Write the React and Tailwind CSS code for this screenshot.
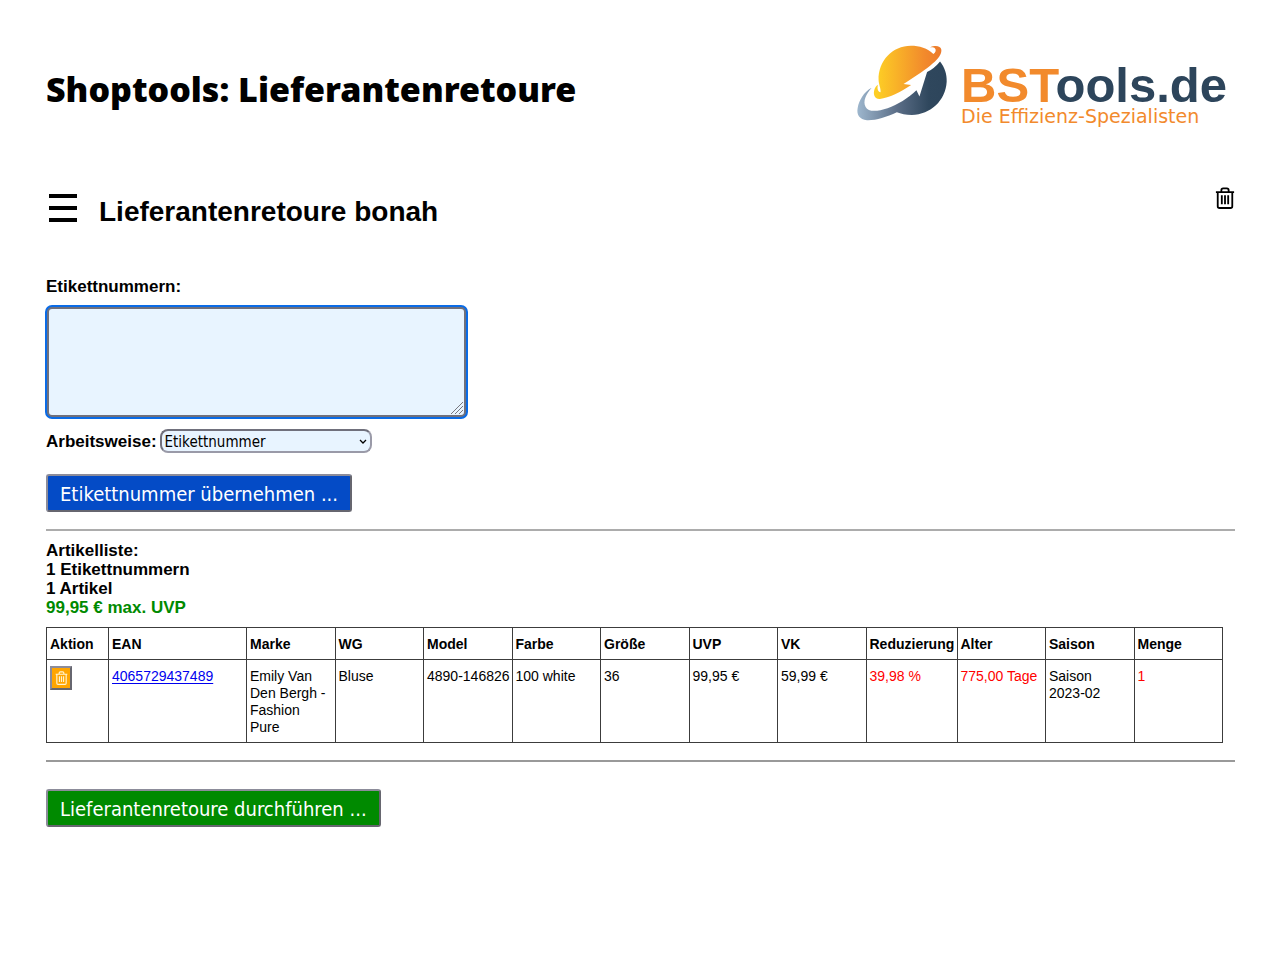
const columns = [
  { title: 'Aktion', width: 'w-[62px]' },
  { title: 'EAN', width: 'w-[138px]' },
  { title: 'Marke' },
  { title: 'WG' },
  { title: 'Model' },
  { title: 'Farbe' },
  { title: 'Größe' },
  { title: 'UVP' },
  { title: 'VK' },
  { title: 'Reduzierung', width: 'w-[91px]' },
  { title: 'Alter' },
  { title: 'Saison' },
  { title: 'Menge' },
];

const articles = [
  {
    ean: '4065729437489',
    brand: 'Emily Van Den Bergh - Fashion Pure',
    values: ['Bluse', '4890-146826', '100 white', '36', '99,95 €', '59,99 €'],
    reduction: '39,98 %',
    age: '775,00 Tage',
    season: 'Saison 2023-02',
    amount: '1',
  },
];

const BORDER = 'border border-[#3c3c3c] px-[3px] align-top';
const CELL = `${BORDER} pt-2 pb-1.5`;
const OUTSET = 'border-2 border-t-[#8c8c9a] border-r-[#66666f] border-b-[#66666f] border-l-[#8c8c9a]';
const ACTION = `block h-[38px] rounded-[3px] ${OUTSET} px-3 pt-0.5 font-['DejaVu_Sans_Condensed','Noto_Sans',sans-serif] text-[20px] leading-8 text-white`;

function Globe() {
  return (
    <svg viewBox="45 42 280 234" className="h-[78px] w-[93px] shrink-0" aria-hidden="true">
      <defs>
        <linearGradient id="sun" x1="0" x2="1">
          <stop offset="0.05" stopColor="#fdce25" />
          <stop offset="0.75" stopColor="#f28a2c" />
          <stop offset="1" stopColor="#ec7a2c" />
        </linearGradient>
        <linearGradient id="sea" gradientUnits="userSpaceOnUse" x1="50" x2="318" y1="0" y2="0">
          <stop offset="0" stopColor="#9db6cd" />
          <stop offset="0.45" stopColor="#5a6d86" />
          <stop offset="0.8" stopColor="#2f475d" />
          <stop offset="1" stopColor="#2d455b" />
        </linearGradient>
      </defs>
      <path
        fill="url(#sea)"
        d="M298 94C312 112 319 132 318 155C315 211 270 254 213 255C195 255 180 252 168 247C136 262 104 272 78 271C56 269 46 254 50 234C54 211 68 186 92 173C75 192 65 214 74 231C82 247 109 245 140 235C171 224 201 206 227 181L236 200L259 126Q281 115 298 94Z"
      />
      <path
        fill="url(#sun)"
        d="M113 150C112 92 155 47 210 47C236 47 260 54 278 72C285 67 287 60 283 55C279 51 273 51 267 52C282 45 300 46 302 59C304 84 268 111 188 162L211 165C180 186 144 204 117 207C99 208 96 190 101 177C103 171 107 166 111 164C108 177 111 184 119 187C120 175 114 166 113 150Z"
      />
    </svg>
  );
}

function TrashIcon({ className }) {
  return (
    <svg viewBox="0 0 22 24" className={className} fill="none" stroke="currentColor" strokeWidth="2" aria-hidden="true">
      <path d="M1 5.5H21M7 5V3.5Q7 1.5 9 1.5H13Q15 1.5 15 3.5V5M3 5.5V21Q3 23 5 23H17Q19 23 19 21V5.5M7.5 9V19M11 9V19M14.5 9V19" />
    </svg>
  );
}

export default function App() {
  return (
    <div className="bg-white pt-11 pr-[45px] pb-16 pl-[46px] font-['Liberation_Sans',Arial,sans-serif] text-[17px] leading-[19px] text-black">
      <header className="flex items-start justify-between">
        <h1 className="pt-5 font-['Noto_Sans','Open_Sans',sans-serif] text-[34px] leading-[50px] font-black">
          Shoptools: Lieferantenretoure
        </h1>
        <div className="flex gap-3 pr-2">
          <Globe />
          <div className="pt-4">
            <div className="text-[49px] leading-[50px] font-bold text-[#2d455b]">
              <span className="text-[#f28a2c]">BST</span>ools.de
            </div>
            <div className="font-['DejaVu_Sans',sans-serif] text-[19px] leading-3 text-[#f28a2c]">
              Die Effizienz-Spezialisten
            </div>
          </div>
        </div>
      </header>

      <main>
        <div className="mt-[64px] flex items-start justify-between">
          <div className="flex items-start gap-[22px]">
            <button type="button" aria-label="Menü" className="flex flex-col gap-2 pt-2 pl-[3px]">
              <span className="h-1 w-7 bg-black" />
              <span className="h-1 w-7 bg-black" />
              <span className="h-1 w-7 bg-black" />
            </button>
            <h2 className="pt-2.5 text-[28px] leading-8 font-bold">Lieferantenretoure bonah</h2>
          </div>
          <button type="button" aria-label="Liste leeren">
            <TrashIcon className="h-6 w-5" />
          </button>
        </div>

        <form className="mt-[49px]">
          <label htmlFor="labels" className="block font-bold">
            Etikettnummern:
          </label>
          <div className="relative mt-2.5 w-[421px] max-w-full">
            <textarea
              id="labels"
              className="block h-28 w-full resize-none rounded-md border-3 border-[#70707c] bg-[#e8f4ff] p-1 outline-2 -outline-offset-1 outline-[#0a6be6]"
            />
            <svg viewBox="0 0 14 14" className="pointer-events-none absolute right-[3px] bottom-[3px] size-3.5" stroke="#77777f" aria-hidden="true">
              <path d="M1 13L13 1M5 13L13 5M9 13L13 9" />
            </svg>
          </div>
          <div className="mt-[11px] flex items-center gap-[3px]">
            <label htmlFor="mode" className="font-bold">
              Arbeitsweise:
            </label>
            <div className="relative">
              <select
                id="mode"
                className="block h-6 w-[212px] appearance-none rounded-lg border-2 border-t-[#70707c] border-r-[#9a9aa8] border-b-[#9a9aa8] border-l-[#70707c] bg-[#e8f4ff] pt-0.5 pl-[3px] font-['DejaVu_Sans_Condensed','Noto_Sans',sans-serif] text-[15px] leading-[18px]"
              >
                <option>Etikettnummer</option>
              </select>
              <svg viewBox="0 0 8 6" className="pointer-events-none absolute top-2.5 right-[5px] h-1.5 w-2" fill="none" stroke="#000" strokeWidth="1.3" aria-hidden="true">
                <path d="M1 1L4 4L7 1" />
              </svg>
            </div>
          </div>
          <button type="button" className={`mt-[21px] ${ACTION} bg-[#044bc6]`}>
            Etikettnummer übernehmen ...
          </button>
        </form>

        <hr className="mt-[17px] border-t-2 border-[#acacac]" />

        <section className="mt-2.5">
          <div className="font-bold">
            <p>Artikelliste:</p>
            <p>1 Etikettnummern</p>
            <p>1 Artikel</p>
            <p className="text-[#008a00]">99,95 € max. UVP</p>
          </div>
          <table className="mt-2.5 w-[99%] table-fixed border-collapse text-left text-[14px] leading-[17px]">
            <thead>
              <tr>
                {columns.map((c) => (
                  <th key={c.title} scope="col" className={`${CELL} ${c.width ?? ''}`}>
                    {c.title}
                  </th>
                ))}
              </tr>
            </thead>
            <tbody>
              {articles.map((a) => (
                <tr key={a.ean}>
                  <td className={`${BORDER} py-1.5`}>
                    <button
                      type="button"
                      aria-label="Artikel löschen"
                      className={`flex h-6 w-[22px] items-center justify-center ${OUTSET} bg-[#ffa500] text-[#fff3d0]`}
                    >
                      <TrashIcon className="h-3.5 w-[13px]" />
                    </button>
                  </td>
                  <td className={CELL}>
                    <a href="#artikel" className="text-[#0000ee] underline underline-offset-2">
                      {a.ean}
                    </a>
                  </td>
                  <td className={CELL}>{a.brand}</td>
                  {a.values.map((v) => (
                    <td key={v} className={`${CELL} whitespace-nowrap`}>
                      {v}
                    </td>
                  ))}
                  <td className={`${CELL} text-[#ff0000]`}>{a.reduction}</td>
                  <td className={`${CELL} text-[#ff0000]`}>{a.age}</td>
                  <td className={CELL}>{a.season}</td>
                  <td className={`${CELL} text-[#ff0000]`}>{a.amount}</td>
                </tr>
              ))}
            </tbody>
          </table>
        </section>

        <hr className="mt-[17px] border-t-2 border-[#999999]" />

        <button type="button" className={`mt-[27px] ${ACTION} bg-[#008a00]`}>
          Lieferantenretoure durchführen ...
        </button>
      </main>
    </div>
  );
}
